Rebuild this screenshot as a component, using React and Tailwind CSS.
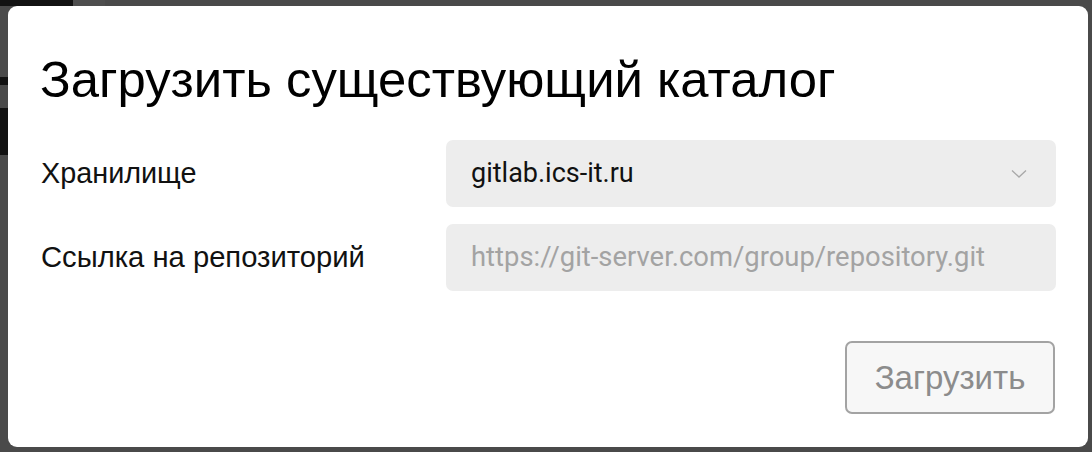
import React from "react";

export default function App() {
  return (
    <div className="relative w-[1092px] h-[452px] overflow-hidden bg-[#4a4a4a]">
      {/* dimmed app behind the dialog */}
      <div className="flex flex-col">
        <div className="flex h-[6px]">
          <div className="w-[73px] bg-[#121212]" />
          <div className="w-[32px] bg-[#4e4e4e]" />
          <div className="flex-1 bg-[#4a4a4a]" />
        </div>
        <div className="flex flex-col w-[8px]">
          <div className="h-[71px] bg-[#4a4a4a]" />
          <div className="h-[8px] bg-[#121212]" />
          <div className="h-[23px] bg-[#4a4a4a]" />
          <div className="h-[47px] bg-[#121212]" />
        </div>
      </div>

      <div className="absolute left-[8px] top-[6px] w-[1080px] h-[441px] bg-white rounded-[9px] px-[32px] font-['Liberation_Sans',Arial,sans-serif]">
        <h1 className="mt-[45px] text-[50.8px] leading-[58px] text-black">
          Загрузить существующий каталог
        </h1>
        <div className="mt-[31px] flex flex-col gap-[17px]">
          <div className="flex items-center">
            <div className="w-[406px] text-[28.8px] text-[#111] pl-[1px]">Хранилище</div>
            <div className="flex-1 h-[67px] rounded-[7px] bg-[#ededed] flex items-center pl-[25px] pr-[29px]">
              <span className="flex-1 font-['Roboto',sans-serif] text-[27px] text-[#111]">gitlab.ics-it.ru</span>
              <svg width="16" height="10" viewBox="0 0 16 10" fill="none">
                <path d="M1 1.5 L8 8 L15 1.5" stroke="#a8a8a8" strokeWidth="1.3" />
              </svg>
            </div>
          </div>
          <div className="flex items-center">
            <div className="w-[406px] text-[29.2px] text-[#111] pl-[1px]">Ссылка на репозиторий</div>
            <div className="flex-1 h-[67px] rounded-[7px] bg-[#ededed] flex items-center pl-[25px]">
              <span className="font-['Roboto',sans-serif] text-[27.4px] text-[#a3a3a3]">
                https://git-server.com/group/repository.git
              </span>
            </div>
          </div>
        </div>
        <div className="mt-[50px] flex justify-end pr-[1px]">
          <button className="w-[210px] h-[73px] rounded-[7px] border-2 border-[#a3a3a3] bg-[#f7f7f7] text-[33px] text-[#8c8c8c]">
            Загрузить
          </button>
        </div>
      </div>
    </div>
  );
}
